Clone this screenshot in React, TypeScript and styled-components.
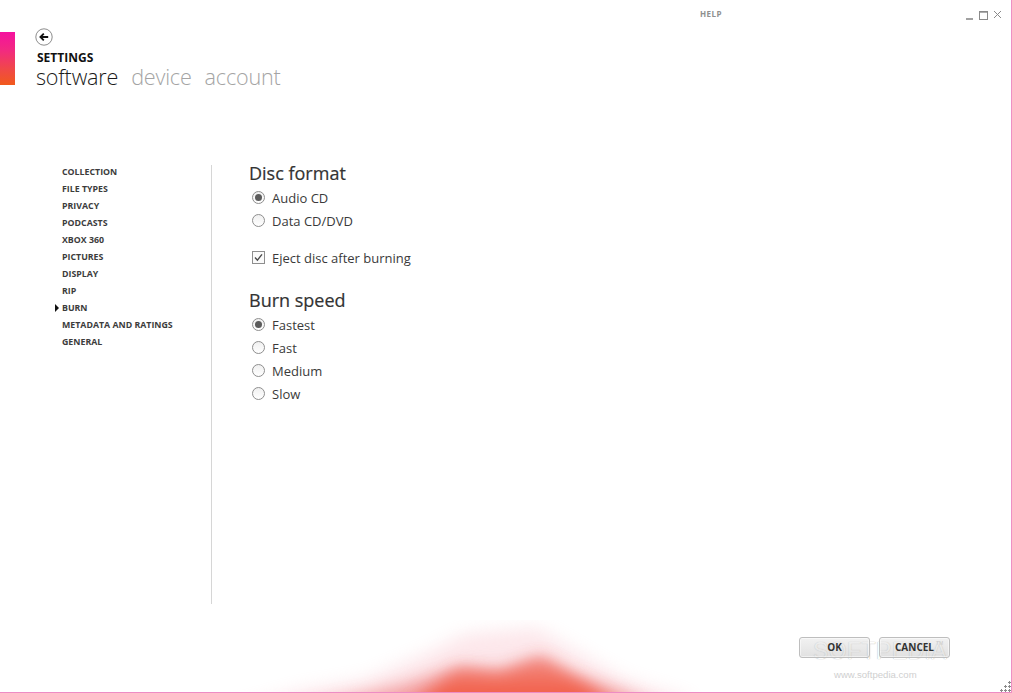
import React from 'react';
import styled, { createGlobalStyle } from 'styled-components';

const GlobalStyle = createGlobalStyle`
  html, body {
    margin: 0;
    padding: 0;
    background: #fff;
    font-family: "Open Sans", "Liberation Sans", sans-serif;
  }
`;

const Frame = styled.div`
  position: relative;
  width: 1012px;
  height: 693px;
  box-sizing: border-box;
  background: #fff;
  border-right: 1px solid #ee8fc4;
  border-bottom: 1px solid #ee8cc4;
  overflow: hidden;
  display: flex;
  flex-direction: column;
`;

const TitleBar = styled.div`
  height: 28px;
  box-sizing: border-box;
  padding: 8px 8px 0 700px;
  display: flex;
  justify-content: space-between;
  align-items: flex-start;
`;

const HelpLink = styled.span`
  font-size: 8px;
  line-height: 11px;
  font-weight: 700;
  color: #8f8f8f;
  letter-spacing: 0.5px;
`;

const WindowControls = styled.svg`
  width: 38px;
  height: 12px;
  margin-top: 1px;
`;

const Header = styled.header`
  display: flex;
  align-items: flex-start;
  height: 137px;
`;

const AccentBar = styled.div`
  width: 15px;
  height: 53px;
  margin-top: 4px;
  background: linear-gradient(180deg, #f5119f 0%, #f22a80 35%, #f04848 70%, #f15a1c 100%);
`;

const HeaderText = styled.div`
  margin-left: 21px;
  display: flex;
  flex-direction: column;
`;

const BackIcon = styled.svg`
  width: 18px;
  height: 18px;
  margin-left: -1px;
`;

const PageTitle = styled.div`
  margin: 4px 0 0 1px;
  font-size: 12px;
  line-height: 15px;
  font-weight: 700;
  color: #111;
`;

const Tabs = styled.nav`
  display: flex;
  gap: 13px;
  margin-top: -2px;
`;

const Tab = styled.span<{ $active?: boolean }>`
  font-size: 21.6px;
  line-height: 28px;
  font-weight: 300;
  letter-spacing: -0.2px;
  color: ${(p) => (p.$active ? '#1a1a1a' : '#a4a4a4')};
`;

const Body = styled.main`
  display: flex;
  align-items: flex-start;
  padding-left: 62px;
`;

const Sidebar = styled.ul`
  list-style: none;
  margin: 0;
  padding: 0;
  width: 149px;
  height: 439px;
  box-sizing: content-box;
  border-right: 1px solid #d6d6d6;
`;

const NavItem = styled.li<{ $current?: boolean }>`
  position: relative;
  height: 17px;
  font-size: 8.8px;
  line-height: 14px;
  font-weight: 700;
  color: #3c3c3c;

  ${(p) =>
    p.$current &&
    `&::before {
      content: '';
      position: absolute;
      left: -7px;
      top: 3px;
      border-left: 4px solid #111;
      border-top: 4px solid transparent;
      border-bottom: 4px solid transparent;
    }`}
`;

const Content = styled.section`
  margin-left: 37px;
  margin-top: -1px;
  display: flex;
  flex-direction: column;
`;

const Heading = styled.h2`
  margin: 0;
  font-size: 18px;
  line-height: 18px;
  font-weight: 400;
  color: #333;
  -webkit-text-stroke: 0.2px #333;
`;

const OptionGroup = styled.div`
  margin-top: 4px;
  margin-left: 3px;
  display: flex;
  flex-direction: column;
`;

const Option = styled.label`
  height: 23px;
  display: flex;
  align-items: center;
  gap: 7px;
  font-size: 13px;
  color: #3a3a3a;
`;

const Radio = styled.span<{ $checked?: boolean }>`
  width: 13px;
  height: 13px;
  box-sizing: border-box;
  border-radius: 50%;
  border: 1px solid #8e8e8e;
  background: linear-gradient(180deg, #f0f0f0, #fff);
  display: flex;
  align-items: center;
  justify-content: center;

  &::after {
    content: '';
    width: 7px;
    height: 7px;
    border-radius: 50%;
    background: ${(p) => (p.$checked ? '#5c5c5c' : 'transparent')};
  }
`;

const CheckBox = styled.span`
  width: 13px;
  height: 13px;
  box-sizing: border-box;
  border: 1px solid #8e8e8e;
  background: #fafafa;
  display: flex;
  align-items: center;
  justify-content: center;
`;

const CheckRow = styled(OptionGroup)`
  margin-top: 14px;
`;

const SpeedHeading = styled(Heading)`
  margin-top: 22px;
`;

const Footer = styled.footer`
  position: absolute;
  right: 61px;
  top: 637px;
  display: flex;
  gap: 9px;
`;

const Button = styled.button`
  width: 71px;
  height: 21px;
  padding: 0 0 2px;
  border: 1px solid #bebebe;
  border-radius: 3px;
  background: linear-gradient(180deg, rgba(232, 232, 232, 0.6) 0%, rgba(205, 205, 205, 0.6) 100%);
  box-shadow: inset 0 0 0 1px rgba(255, 255, 255, 0.5);
  font-family: inherit;
  font-size: 10px;
  font-weight: 700;
  color: #333;
`;

const Glow = styled.svg`
  position: absolute;
  left: 200px;
  top: 620px;
  width: 600px;
  height: 73px;
  pointer-events: none;
`;

const WatermarkBig = styled.span`
  position: absolute;
  left: 813px;
  top: 637px;
  font-family: "Liberation Sans", sans-serif;
  font-size: 23px;
  line-height: 28px;
  letter-spacing: 0.4px;
  color: #fff;
  text-shadow: 0 0 1px rgba(130, 130, 130, 0.9);
  pointer-events: none;
`;

const TradeMark = styled.span`
  position: absolute;
  left: 936px;
  top: 640px;
  font-family: "Liberation Sans", sans-serif;
  font-size: 5px;
  line-height: 6px;
  color: #c8c8c8;
`;

const WatermarkSmall = styled.span`
  position: absolute;
  left: 834px;
  top: 668px;
  font-family: "Liberation Sans", sans-serif;
  font-size: 9.6px;
  line-height: 13px;
  color: #cfcfcf;
`;

const ResizeGrip = styled.svg`
  position: absolute;
  right: 0;
  bottom: 0;
  width: 12px;
  height: 12px;
`;

const navItems = [
  'COLLECTION',
  'FILE TYPES',
  'PRIVACY',
  'PODCASTS',
  'XBOX 360',
  'PICTURES',
  'DISPLAY',
  'RIP',
  'BURN',
  'METADATA AND RATINGS',
  'GENERAL',
];

const discFormats = [
  { label: 'Audio CD', checked: true },
  { label: 'Data CD/DVD', checked: false },
];

const burnSpeeds = [
  { label: 'Fastest', checked: true },
  { label: 'Fast', checked: false },
  { label: 'Medium', checked: false },
  { label: 'Slow', checked: false },
];

const gripDots = [
  [9, 2],
  [5, 6],
  [9, 6],
  [1, 10],
  [5, 10],
  [9, 10],
];

const App = () => {
  return (
    <Frame>
      <GlobalStyle />
      <TitleBar>
        <HelpLink>HELP</HelpLink>
        <WindowControls viewBox="0 0 38 12">
          <path d="M1 10h7" stroke="#8a8a8a" strokeWidth="1.6" fill="none" />
          <rect x="14.5" y="2.5" width="8" height="8" stroke="#8a8a8a" fill="none" />
          <path d="M14.5 3h8" stroke="#8a8a8a" strokeWidth="1.4" fill="none" />
          <path d="M29 2l7 7M36 2l-7 7" stroke="#8a8a8a" strokeWidth="1" fill="none" />
        </WindowControls>
      </TitleBar>
      <Header>
        <AccentBar />
        <HeaderText>
          <BackIcon viewBox="0 0 18 18">
            <circle cx="9" cy="9" r="8.2" stroke="#8c8c8c" strokeWidth="1" fill="#fff" />
            <path d="M13.2 9H5.6M8.8 5.6L5.4 9l3.4 3.4" stroke="#111" strokeWidth="1.8" fill="none" />
          </BackIcon>
          <PageTitle>SETTINGS</PageTitle>
          <Tabs>
            <Tab $active>software</Tab>
            <Tab>device</Tab>
            <Tab>account</Tab>
          </Tabs>
        </HeaderText>
      </Header>
      <Body>
        <Sidebar>
          {navItems.map((item) => (
            <NavItem key={item} $current={item === 'BURN'}>
              {item}
            </NavItem>
          ))}
        </Sidebar>
        <Content>
          <Heading>Disc format</Heading>
          <OptionGroup>
            {discFormats.map((o) => (
              <Option key={o.label}>
                <Radio $checked={o.checked} />
                {o.label}
              </Option>
            ))}
          </OptionGroup>
          <CheckRow>
            <Option>
              <CheckBox>
                <svg width="9" height="9" viewBox="0 0 9 9">
                  <path d="M1 4.5l2.4 2.6L8 1.4" stroke="#4a4a4a" strokeWidth="1.4" fill="none" />
                </svg>
              </CheckBox>
              Eject disc after burning
            </Option>
          </CheckRow>
          <SpeedHeading>Burn speed</SpeedHeading>
          <OptionGroup>
            {burnSpeeds.map((o) => (
              <Option key={o.label}>
                <Radio $checked={o.checked} />
                {o.label}
              </Option>
            ))}
          </OptionGroup>
        </Content>
      </Body>
      <Glow viewBox="0 0 600 73">
        <defs>
          <filter id="blurWide" x="-100" y="-60" width="800" height="200" filterUnits="userSpaceOnUse">
            <feGaussianBlur stdDeviation="9" />
          </filter>
          <filter id="blurCore" x="-100" y="-60" width="800" height="200" filterUnits="userSpaceOnUse">
            <feGaussianBlur stdDeviation="8" />
          </filter>
          <linearGradient id="coreFill" gradientUnits="userSpaceOnUse" x1="0" y1="30" x2="0" y2="73">
            <stop offset="0" stopColor="#f2705e" stopOpacity="0.35" />
            <stop offset="1" stopColor="#f2604a" stopOpacity="1" />
          </linearGradient>
        </defs>
        <polygon
          points="0,100 96,72 165,60 230,32 265,14 337,8 367,26 425,60 490,80 490,100"
          fill="#f9c3cc"
          opacity="0.4"
          filter="url(#blurWide)"
        />
        <polygon
          points="40,100 165,74 205,64 260,46 300,50 340,36 372,54 425,72 490,100"
          fill="#f08a8a"
          opacity="0.75"
          filter="url(#blurCore)"
        />
        <polygon
          points="190,100 258,50 300,54 342,38 382,62 440,100"
          fill="url(#coreFill)"
          filter="url(#blurCore)"
        />
      </Glow>
      <WatermarkBig>SOFTPEDIA</WatermarkBig>
      <Footer>
        <Button>OK</Button>
        <Button>CANCEL</Button>
      </Footer>
      <TradeMark>TM</TradeMark>
      <WatermarkSmall>www.softpedia.com</WatermarkSmall>
      <ResizeGrip viewBox="0 0 12 12">
        {gripDots.map(([x, y]) => (
          <path key={`${x}-${y}`} d={`M${x} ${y + 0.5}h3M${x + 1.5} ${y - 1}v3`} stroke="#8a8a8a" strokeWidth="1" fill="none" />
        ))}
      </ResizeGrip>
    </Frame>
  );
};

export default App;
